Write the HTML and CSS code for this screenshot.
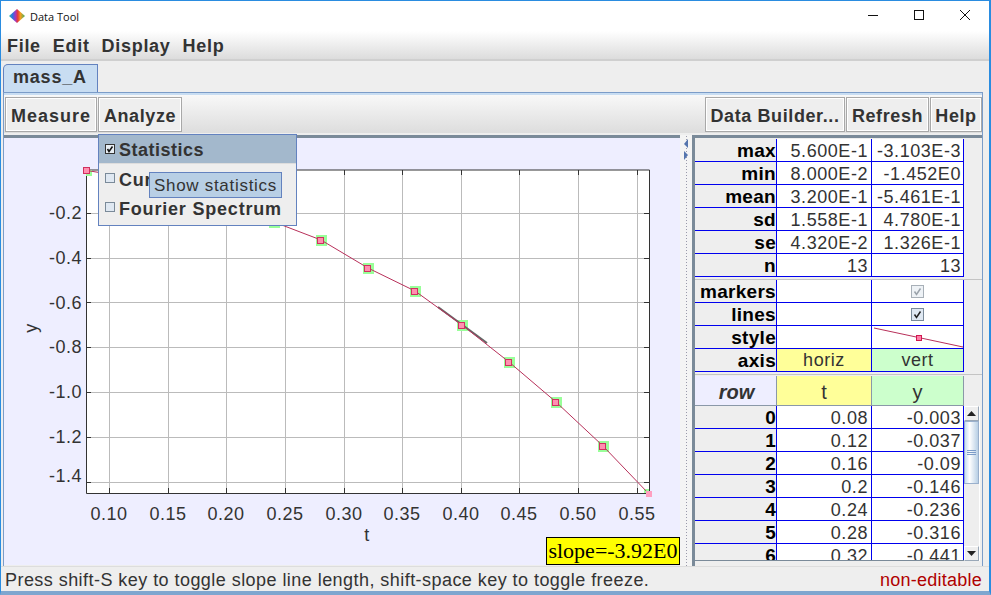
FILE: index.html
```html
<!DOCTYPE html>
<html lang="en">
<head>
<meta charset="utf-8">
<title>Data Tool</title>
<link rel="stylesheet" href="styles.css">
</head>
<body>
<div class="window">
  <header class="titlebar">
    <svg class="appicon" width="16" height="14" viewBox="0 0 16 14">
      <defs><linearGradient id="rainbow">
        <stop offset="0" stop-color="#30b8a0"/><stop offset=".22" stop-color="#3070e0"/><stop offset=".4" stop-color="#a038c0"/>
        <stop offset=".55" stop-color="#e83838"/><stop offset=".72" stop-color="#f0a020"/><stop offset="1" stop-color="#40b060"/>
      </linearGradient></defs>
      <polygon points="0,7 8,0 16,7 8,14" fill="url(#rainbow)"/>
    </svg>
    <span class="apptitle">Data Tool</span>
    <div class="winctl">
      <svg width="12" height="12" viewBox="0 0 12 12"><path d="M1 6.500H11" stroke="#111" fill="none"/></svg>
      <svg width="12" height="12" viewBox="0 0 12 12"><rect x="1.500" y="1.500" width="9" height="9" stroke="#111" fill="none"/></svg>
      <svg width="12" height="12" viewBox="0 0 12 12"><path d="M1 1L11 11M11 1L1 11" stroke="#111" fill="none"/></svg>
    </div>
  </header>
  <nav class="menubar">
    <span>File</span><span>Edit</span><span>Display</span><span>Help</span>
  </nav>
  <div class="tabstrip"><div class="tab">mass_A</div></div>
  <section class="pane">
    <div class="toolbar">
      <button class="tbtn tbtn-measure">Measure</button>
      <button class="tbtn tbtn-analyze">Analyze</button>
      <span class="spacer"></span>
      <button class="tbtn tbtn-builder">Data Builder...</button>
      <button class="tbtn tbtn-refresh">Refresh</button>
      <button class="tbtn tbtn-help">Help</button>
    </div>
    <div class="main">
      <div class="plot">
        <svg class="chart" width="676" height="427" viewBox="4 138 676 427">
          <defs><clipPath id="area"><rect x="86" y="170" width="563" height="323"/></clipPath></defs>
          <rect x="86" y="170" width="563" height="323" fill="#fff"/>
          <g stroke="#bbb" fill="none">
            <path d="M109.500 170V493M168.500 170V493M226.500 170V493M285.500 170V493M344.500 170V493M402.500 170V493M461.500 170V493M519.500 170V493M578.500 170V493M637.500 170V493"/>
            <path d="M86 213.500H649M86 258.500H649M86 302.500H649M86 347.500H649M86 392.500H649M86 437.500H649M86 482.500H649"/>
          </g>
          <g stroke="#333" fill="none">
            <path d="M86.500 170V493.500H649.500V170H86.500"/>
            <path d="M109.500 493V488M168.500 493V488M226.500 493V488M285.500 493V488M344.500 493V488M402.500 493V488M461.500 493V488M519.500 493V488M578.500 493V488M637.500 493V488M109.500 170V175M168.500 170V175M226.500 170V175M285.500 170V175M344.500 170V175M402.500 170V175M461.500 170V175M519.500 170V175M578.500 170V175M637.500 170V175"/>
            <path d="M86 213.500H91M86 258.500H91M86 302.500H91M86 347.500H91M86 392.500H91M86 437.500H91M86 482.500H91M649 213.500H644M649 258.500H644M649 302.500H644M649 347.500H644M649 392.500H644M649 437.500H644M649 482.500H644"/>
          </g>
          <g clip-path="url(#area)" fill="#99ff99">
            <rect x="81" y="165" width="11" height="11"/>
            <rect x="269" y="217" width="11" height="11"/>
            <rect x="316" y="235" width="11" height="11"/>
            <rect x="363" y="263" width="11" height="11"/>
            <rect x="410" y="286" width="11" height="11"/>
            <rect x="457" y="320" width="11" height="11"/>
            <rect x="504" y="357" width="11" height="11"/>
            <rect x="551" y="397" width="11" height="11"/>
            <rect x="598" y="441" width="11" height="11"/>
            <rect x="644" y="489" width="11" height="11"/>
          </g>
          <path d="M438 307L487 343" stroke="#666" stroke-width="2" fill="none"/>
          <polyline points="87,170.500 133,178 180,190 227,203 274,222 321,240 368,268 415,291 462,325 509,362 556,402 603,446 649,494" fill="none" stroke="#b8305a"/>
          <g fill="#ff8fb0" stroke="#d03060">
            <rect x="83.500" y="167.500" width="6" height="6"/>
            <rect x="317.500" y="237.500" width="6" height="6"/>
            <rect x="364.500" y="265.500" width="6" height="6"/>
            <rect x="411.500" y="288.500" width="6" height="6"/>
            <rect x="458.500" y="322.500" width="6" height="6"/>
            <rect x="505.500" y="359.500" width="6" height="6"/>
            <rect x="552.500" y="399.500" width="6" height="6"/>
            <rect x="599.500" y="443.500" width="6" height="6"/>
          </g>
          <rect x="646" y="491" width="6" height="6" fill="#ff9fc0"/>
          <g class="ticktext" text-anchor="end">
            <text x="82" y="219">-0.2</text>
            <text x="82" y="264">-0.4</text>
            <text x="82" y="309">-0.6</text>
            <text x="82" y="353">-0.8</text>
            <text x="82" y="398">-1.0</text>
            <text x="82" y="443">-1.2</text>
            <text x="82" y="482">-1.4</text>
          </g>
          <g class="ticktext" text-anchor="middle">
            <text x="109" y="520">0.10</text>
            <text x="168" y="520">0.15</text>
            <text x="226" y="520">0.20</text>
            <text x="285" y="520">0.25</text>
            <text x="344" y="520">0.30</text>
            <text x="402" y="520">0.35</text>
            <text x="461" y="520">0.40</text>
            <text x="519" y="520">0.45</text>
            <text x="578" y="520">0.50</text>
            <text x="637" y="520">0.55</text>
            <text x="367" y="541">t</text>
            <text x="37" y="328" transform="rotate(-90 37 328)">y</text>
          </g>
        </svg>
        <div class="slope">slope=-3.92E0</div>
      </div>
      <div class="splitter">
        <svg width="6" height="22" viewBox="0 0 6 22"><path d="M5 0V9L1 5Z" fill="#5575ad"/><path d="M1 12V21L5 16Z" fill="#5575ad"/></svg>
      </div>
      <div class="side">
        <div class="grid stats">
          <div class="lab">max</div><div class="val">5.600E-1</div><div class="val">-3.103E-3</div>
          <div class="lab">min</div><div class="val">8.000E-2</div><div class="val">-1.452E0</div>
          <div class="lab">mean</div><div class="val">3.200E-1</div><div class="val">-5.461E-1</div>
          <div class="lab">sd</div><div class="val">1.558E-1</div><div class="val">4.780E-1</div>
          <div class="lab">se</div><div class="val">4.320E-2</div><div class="val">1.326E-1</div>
          <div class="lab">n</div><div class="val">13</div><div class="val">13</div>
        </div>
        <div class="grid props">
          <div class="lab">markers</div><div class="val"></div>
          <div class="val ctr"><svg width="13" height="13" viewBox="0 0 13 13"><rect x=".5" y=".5" width="12" height="12" fill="#eef2f6" stroke="#a8b0b8"/><path d="M3.500 6.500L5.500 9.500L9.500 3.500" fill="none" stroke="#9aa2aa" stroke-width="1.500"/></svg></div>
          <div class="lab">lines</div><div class="val"></div>
          <div class="val ctr"><svg width="13" height="13" viewBox="0 0 13 13"><rect x=".5" y=".5" width="12" height="12" fill="#dfe8f2" stroke="#7a8a99"/><path d="M3.500 6.500L5.500 9.500L9.500 3.500" fill="none" stroke="#222" stroke-width="1.500"/></svg></div>
          <div class="lab">style</div><div class="val"></div>
          <div class="val stylecell"><svg width="92" height="22" viewBox="0 0 92 22"><path d="M2 2L91 21" stroke="#b8305a" fill="none"/><rect x="44.500" y="9.500" width="5" height="5" fill="#ff7fa8" stroke="#d01850"/></svg></div>
          <div class="lab">axis</div><div class="val ctr yellow">horiz</div><div class="val ctr green">vert</div>
        </div>
        <div class="datawrap">
          <div class="dataclip">
            <div class="grid head">
              <div class="hcell hrow">row</div><div class="hcell yellow">t</div><div class="hcell green">y</div>
            </div>
            <div class="grid rows">
              <div class="lab">0</div><div class="val">0.08</div><div class="val">-0.003</div>
              <div class="lab">1</div><div class="val">0.12</div><div class="val">-0.037</div>
              <div class="lab">2</div><div class="val">0.16</div><div class="val">-0.09</div>
              <div class="lab">3</div><div class="val">0.2</div><div class="val">-0.146</div>
              <div class="lab">4</div><div class="val">0.24</div><div class="val">-0.236</div>
              <div class="lab">5</div><div class="val">0.28</div><div class="val">-0.316</div>
              <div class="lab">6</div><div class="val">0.32</div><div class="val">-0.441</div>
            </div>
          </div>
          <div class="scrollbar">
            <div class="sbtn"><svg width="9" height="5" viewBox="0 0 9 5"><path d="M4.500 0L9 5H0Z" fill="#222"/></svg></div>
            <div class="thumb"><span></span><span></span><span></span></div>
            <div class="strack"></div>
            <div class="sbtn"><svg width="9" height="5" viewBox="0 0 9 5"><path d="M0 0H9L4.500 5Z" fill="#222"/></svg></div>
          </div>
        </div>
      </div>
    </div>
  </section>
  <footer class="status">
    <span>Press shift-S key to toggle slope line length, shift-space key to toggle freeze.</span>
    <span class="noedit">non-editable</span>
  </footer>
  <div class="popup">
    <div class="mi mi-on"><svg width="10" height="10" viewBox="0 0 10 10"><rect x=".5" y=".5" width="9" height="9" fill="#e8eef4" stroke="#333"/><path d="M2.500 5L4 7.500L7.500 2.500" fill="none" stroke="#111" stroke-width="1.500"/></svg>Statistics</div>
    <div class="mi"><svg width="10" height="10" viewBox="0 0 10 10"><rect x=".5" y=".5" width="9" height="9" fill="#dfe8f2" stroke="#7a8a99"/></svg>Curve Fits</div>
    <div class="mi"><svg width="10" height="10" viewBox="0 0 10 10"><rect x=".5" y=".5" width="9" height="9" fill="#dfe8f2" stroke="#7a8a99"/></svg>Fourier Spectrum</div>
  </div>
  <div class="tooltip">Show statistics</div>
</div>
</body>
</html>
```

FILE: styles.css
```css
* { box-sizing: border-box; }
html, body { margin: 0; padding: 0; }
body { width: 991px; height: 595px; overflow: hidden; font-family: "Liberation Sans", Arial, sans-serif; }
.window {
  position: relative; width: 991px; height: 595px; display: flex; flex-direction: column;
  background: #eeeeee; border-top: 1px solid #2a8ce0; border-left: 1px solid #2a8ce0;
  border-right: 2px solid #2a8ce0; border-bottom: 4px solid #7ea6cf; overflow: hidden;
}
.titlebar { height: 30px; flex: none; background: #fff; display: flex; align-items: center; padding-left: 8px; }
.appicon { flex: none; }
.apptitle { margin-left: 5px; font: 11px "Open Sans", sans-serif; color: #111; }
.winctl { margin-left: auto; display: flex; gap: 34px; padding: 0 18px 2px 0; }
.menubar {
  height: 30px; flex: none; display: flex; align-items: center; gap: 12px; padding: 3px 0 0 6px;
  background: linear-gradient(#ffffff, #dcdcdc); border-bottom: 2px solid #cfcfcf;
  font-weight: bold; font-size: 18px; letter-spacing: .7px; color: #333;
}
.tabstrip { height: 31px; flex: none; padding: 3px 0 0 2px; background: #eee; }
.tab {
  width: 95px; height: 28px; background: #c8ddf2; border: 1px solid #6382bf; border-bottom: none; border-top-left-radius: 5px;
  padding-left: 9px; font-weight: bold; font-size: 18px; letter-spacing: .8px; color: #333; line-height: 25px;
}
.pane {
  height: 474px; flex: none; margin: 0 6px 0 2px; border: 1px solid #7b9cc8;
  border-bottom: none; display: flex; flex-direction: column; background: #eee;
}
.toolbar {
  height: 40px; flex: none; display: flex; padding: 2px 0 1px 1px; border-top: 2px solid #c8ddf2;
  background: linear-gradient(#f8f8f8, #dddddd);
}
.spacer { flex: 1; }
.tbtn {
  height: 35px; margin: 0 1px 0 0; padding: 3px 0 0; background: #eee; border: 1px solid #a8a8a8; outline: 1px solid #fff; outline-offset: -2px;
  font: bold 18px "Liberation Sans", Arial, sans-serif; letter-spacing: .6px; color: #333;
}
.tbtn-measure { width: 92px; letter-spacing: 1px; }
.tbtn-analyze { width: 84px; }
.tbtn-builder { width: 140px; }
.tbtn-refresh { width: 83px; }
.tbtn-help { width: 52px; margin-right: 0; }
.main { flex: 1; min-height: 0; display: flex; padding-top: 2px; }
.plot { position: relative; width: 676px; flex: none; border-top: 3px solid #7a8a99; background: #eeeeff; height: 430px; }
.chart { display: block; }
.ticktext text { font: 18px "Liberation Sans", Arial, sans-serif; fill: #333; letter-spacing: .5px; }
.slope {
  position: absolute; right: 0; bottom: 0; width: 134px; height: 28px; background: #ffff00; border: 1px solid #000;
  font: 22px/26px "Liberation Serif", serif; color: #000; text-align: center; white-space: nowrap;
}
.splitter {
  width: 12px; flex: none; padding: 4px 0 0 3px;
  background: radial-gradient(#99a 35%, transparent 45%) 5px 0 / 3px 3px repeat-y #f4f4f4;
}
.splitter svg { display: block; }
.side {
  flex: 1; min-width: 0; border-top: 3px solid #7a8a99; border-left: 3px solid #7a8a99; padding-top: 1px;
  display: flex; flex-direction: column;
}
.grid { display: grid; grid-template-columns: 82px 95px 92px; font-size: 18px; }
.stats { margin-bottom: 2px; }
.props { border-top: 1px solid #c4c4c4; margin-bottom: 2px; }
.datawrap { border-top: 1px solid #c4c4c4; padding-top: 1px; display: flex; height: 188px; }
.lab, .val { height: 23px; line-height: 24px; border-bottom: 1px solid #0000ee; text-align: right; white-space: nowrap; }
.lab { font-weight: bold; font-size: 19px; letter-spacing: .3px; color: #000; padding-right: 0; border-right: 1px solid #0000ee; background: #eee; }
.val { background: #fff; color: #333; padding-right: 3px; border-right: 1px solid #0000ee; letter-spacing: .55px; }
.val:nth-child(3n) { padding-right: 2px; }
.ctr, .val.ctr { text-align: center; display: flex; align-items: center; justify-content: center; padding: 0; }
.stylecell { padding: 0; }
.stylecell svg { display: block; }
.yellow { background: #ffff99; }
.green { background: #ccffcc; }
.dataclip { width: 269px; height: 185px; overflow: hidden; border-bottom: 1px solid #7a8a99; flex: none; }
.head { height: 30px; }
.hcell { height: 30px; line-height: 33px; text-align: center; border-right: 1px solid #8a98a8; border-bottom: 1px solid #8a98a8; font-size: 20px; color: #333; }
.hrow { background: #eeeeff; font-style: italic; font-weight: bold; padding-left: 2px; }
.scrollbar { width: 16px; height: 155px; margin-top: 30px; flex: none; display: flex; flex-direction: column; background: #eee; border-right: 1px solid #fff; }
.sbtn { height: 15px; flex: none; display: flex; align-items: center; justify-content: center; background: #eee; border: 1px solid #9aa8b8; border-top-color: #fff; border-left-color: #fff; }
.thumb { height: 63px; flex: none; display: flex; flex-direction: column; align-items: center; justify-content: center; gap: 1px; background: linear-gradient(90deg, #c8ddf2, #ffffff 35%, #b8cfe5); border: 1px solid #9ab0cc; }
.thumb span { width: 9px; height: 1px; background: #7c9cc8; }
.strack { flex: 1; }
.status {
  flex: 1; display: flex; justify-content: space-between; align-items: center; padding: 2px 7px 0 4px;
  font-size: 18px; letter-spacing: .45px; color: #333; background: #eee; border-top: 1px solid #ddd;
}
.noedit { color: #b00000; letter-spacing: .25px; }
.popup {
  position: absolute; left: 97px; top: 133px; width: 199px; height: 92px; background: #eee; border: 1px solid #6382bf;
  font-weight: bold; font-size: 18px; letter-spacing: .8px; color: #333;
}
.mi { height: 29px; display: flex; align-items: center; gap: 4px; padding: 3px 0 0 6px; }
.mi svg { margin-top: -3px; }
.mi:nth-child(n+2) svg { margin-top: -5px; }
.mi-on { height: 29px; background: #a3b8cc; border-bottom: 1px solid #ddd; letter-spacing: .5px; }
.tooltip {
  position: absolute; left: 148px; top: 171px; width: 133px; height: 26px; background: #b8cfe5; border: 1px solid #6382bf;
  font-size: 17px; letter-spacing: .7px; line-height: 26px; padding-left: 4px; color: #333; white-space: nowrap;
}
```
